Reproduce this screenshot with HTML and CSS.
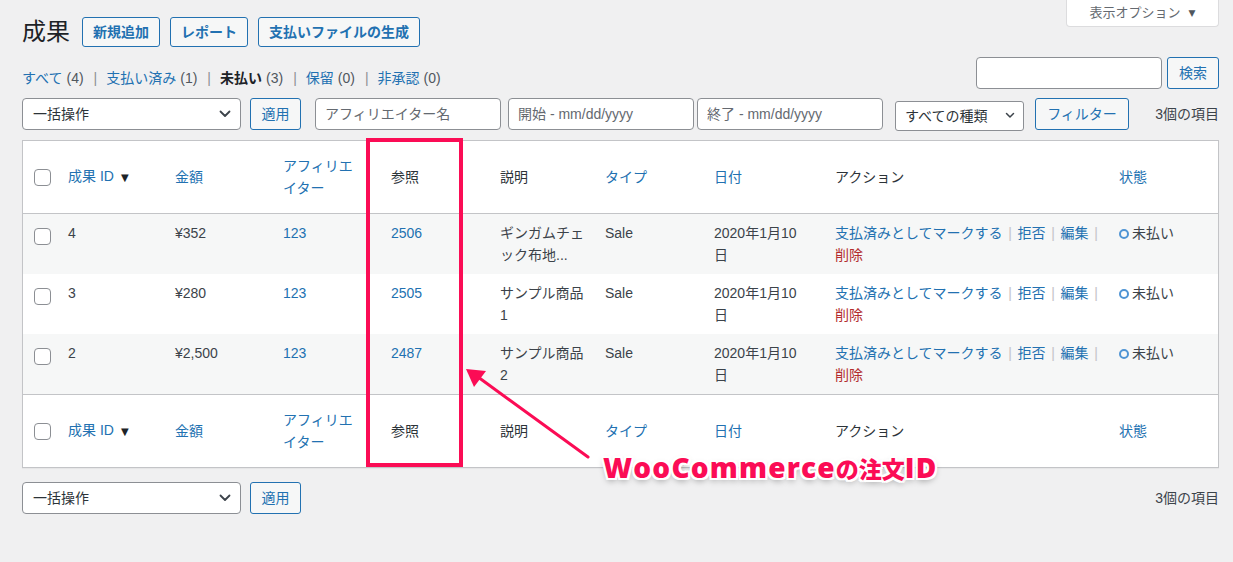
FILE: index.html
```html
<!DOCTYPE html>
<html lang="ja">
<head>
<meta charset="utf-8">
<title>成果</title>
<link rel="stylesheet" href="styles.css">
</head>
<body>
<div class="wrap">
  <div class="head-row">
    <div class="title-group">
      <h1 class="page-title">成果</h1>
      <a class="title-action">新規追加</a>
      <a class="title-action">レポート</a>
      <a class="title-action">支払いファイルの生成</a>
    </div>
    <div class="screen-options">表示オプション<span class="tri">▼</span></div>
  </div>

  <div class="sub-row">
    <ul class="subsubsub">
      <li><a>すべて</a><span class="count">(4)</span><span class="sep">|</span></li>
      <li><a>支払い済み</a><span class="count">(1)</span><span class="sep">|</span></li>
      <li><b class="current">未払い</b><span class="count">(3)</span><span class="sep">|</span></li>
      <li><a>保留</a><span class="count">(0)</span><span class="sep">|</span></li>
      <li><a>非承認</a><span class="count">(0)</span></li>
    </ul>
    <div class="search-box">
      <input class="search-input" type="text">
      <button class="btn">検索</button>
    </div>
  </div>

  <div class="tablenav">
    <div class="select bulk"><span>一括操作</span><svg class="chev" width="12" height="8" viewBox="0 0 12 8"><path d="M1.5 1.5 6 6l4.5-4.5" fill="none" stroke="#3c434a" stroke-width="1.8" stroke-linecap="round" stroke-linejoin="round"/></svg></div>
    <button class="btn apply">適用</button>
    <input class="filter-input f-aff" type="text" placeholder="アフィリエイター名">
    <input class="filter-input f-start" type="text" placeholder="開始 - mm/dd/yyyy">
    <input class="filter-input f-end" type="text" placeholder="終了 - mm/dd/yyyy">
    <div class="select type"><span>すべての種類</span><svg class="chev small" width="10" height="7" viewBox="0 0 10 7"><path d="M1.5 1.5 5 5l3.5-3.5" fill="none" stroke="#3c434a" stroke-width="1.5" stroke-linecap="round" stroke-linejoin="round"/></svg></div>
    <button class="btn filter">フィルター</button>
    <span class="items">3個の項目</span>
  </div>

  <div class="table-box">
    <table class="list">
      <colgroup>
        <col class="c-cb"><col class="c-id"><col class="c-amt"><col class="c-aff"><col class="c-ref"><col class="c-desc"><col class="c-type"><col class="c-date"><col class="c-act"><col class="c-st">
      </colgroup>
      <thead>
        <tr>
          <th class="cb"><span class="check"></span></th>
          <th><a>成果 ID</a><span class="sort">▼</span></th>
          <th><a>金額</a></th>
          <th class="th-aff"><a>アフィリエイター</a></th>
          <th class="plain">参照</th>
          <th class="plain">説明</th>
          <th><a>タイプ</a></th>
          <th><a>日付</a></th>
          <th class="plain">アクション</th>
          <th><a>状態</a></th>
        </tr>
      </thead>
      <tbody>
        <tr class="alt">
          <td class="cb"><span class="check"></span></td>
          <td>4</td>
          <td>¥352</td>
          <td><a>123</a></td>
          <td><a>2506</a></td>
          <td class="desc">ギンガムチェック布地...</td>
          <td>Sale</td>
          <td class="date">2020年1月10日</td>
          <td class="act"><span class="ra"><a>支払済みとしてマークする</a><span class="sep">|</span></span><span class="ra"><a>拒否</a><span class="sep">|</span></span><span class="ra"><a>編集</a><span class="sep">|</span></span><span class="ra"><a class="del">削除</a></span></td>
          <td><span class="ring"></span>未払い</td>
        </tr>
        <tr>
          <td class="cb"><span class="check"></span></td>
          <td>3</td>
          <td>¥280</td>
          <td><a>123</a></td>
          <td><a>2505</a></td>
          <td class="desc">サンプル商品 1</td>
          <td>Sale</td>
          <td class="date">2020年1月10日</td>
          <td class="act"><span class="ra"><a>支払済みとしてマークする</a><span class="sep">|</span></span><span class="ra"><a>拒否</a><span class="sep">|</span></span><span class="ra"><a>編集</a><span class="sep">|</span></span><span class="ra"><a class="del">削除</a></span></td>
          <td><span class="ring"></span>未払い</td>
        </tr>
        <tr class="alt">
          <td class="cb"><span class="check"></span></td>
          <td>2</td>
          <td>¥2,500</td>
          <td><a>123</a></td>
          <td><a>2487</a></td>
          <td class="desc">サンプル商品 2</td>
          <td>Sale</td>
          <td class="date">2020年1月10日</td>
          <td class="act"><span class="ra"><a>支払済みとしてマークする</a><span class="sep">|</span></span><span class="ra"><a>拒否</a><span class="sep">|</span></span><span class="ra"><a>編集</a><span class="sep">|</span></span><span class="ra"><a class="del">削除</a></span></td>
          <td><span class="ring"></span>未払い</td>
        </tr>
      </tbody>
      <tfoot>
        <tr>
          <th class="cb"><span class="check"></span></th>
          <th><a>成果 ID</a><span class="sort">▼</span></th>
          <th><a>金額</a></th>
          <th class="th-aff"><a>アフィリエイター</a></th>
          <th class="plain">参照</th>
          <th class="plain">説明</th>
          <th><a>タイプ</a></th>
          <th><a>日付</a></th>
          <th class="plain">アクション</th>
          <th><a>状態</a></th>
        </tr>
      </tfoot>
    </table>
  </div>

  <div class="tablenav bottom">
    <div class="select bulk"><span>一括操作</span><svg class="chev" width="12" height="8" viewBox="0 0 12 8"><path d="M1.5 1.5 6 6l4.5-4.5" fill="none" stroke="#3c434a" stroke-width="1.8" stroke-linecap="round" stroke-linejoin="round"/></svg></div>
    <button class="btn apply">適用</button>
    <span class="items">3個の項目</span>
  </div>
</div>

<div class="annot-box"></div>
<svg class="annot-arrow" width="1233" height="562" viewBox="0 0 1233 562">
  <line x1="588" y1="457" x2="478" y2="377" stroke="#fb0c55" stroke-width="3" stroke-linecap="round"/>
  <polygon points="466,369 486,371 474,387" fill="#fb0c55"/>
</svg>
<div class="annot-text"><span class="lat">WooCommerce</span><span class="cjk">の注文</span><span class="lat">ID</span></div>
</body>
</html>
```

FILE: styles.css
```css
* { box-sizing: border-box; }
html, body { margin: 0; padding: 0; }
body {
  background: #f0f0f1;
  color: #3c434a;
  font-family: "Liberation Sans", "Noto Sans CJK JP", sans-serif;
  font-size: 14px;
  line-height: 22px;
  position: relative;
  min-height: 562px;
  overflow: hidden;
}
a { color: #2271b1; text-decoration: none; }

.wrap { padding: 0 14px 0 22px; }

/* header */
.head-row { display: flex; justify-content: space-between; align-items: flex-start; }
.title-group { display: flex; align-items: center; margin-top: 16px; height: 31px; }
.page-title {
  margin: 0 12px 0 0;
  font-size: 24px;
  font-weight: 400;
  line-height: 31px;
  color: #1d2327;
}
.title-action {
  display: inline-flex;
  align-items: center;
  height: 30px;
  padding: 0 10px;
  margin-right: 10px;
  border: 1px solid #2271b1;
  border-radius: 3px;
  background: #f6f7f7;
  color: #2271b1;
  font-weight: 700;
  font-size: 14px;
}
.screen-options {
  width: 153px;
  height: 27px;
  display: flex;
  align-items: center;
  justify-content: center;
  gap: 8px;
  background: #fff;
  border: 1px solid #dcdcde;
  border-top: none;
  border-radius: 0 0 4px 4px;
  color: #646970;
  font-size: 13px;
}
.screen-options .tri { font-size: 9px; color: #50575e; font-family: "DejaVu Sans", sans-serif; }

/* views + search */
.sub-row { display: flex; justify-content: space-between; align-items: flex-start; margin-top: 10px; }
.subsubsub { list-style: none; margin: 10px 0 0; padding: 0; display: flex; color: #50575e; font-size: 14px; }
.subsubsub .count { margin-left: 4px; color: #50575e; }
.subsubsub .sep { margin: 0 9px 0 10px; color: #8c8f94; }
.subsubsub .current { color: #1d2327; font-weight: 700; }
.search-box { display: flex; }
.search-input {
  width: 186px;
  height: 32px;
  margin-right: 5px;
  border: 1px solid #8c8f94;
  border-radius: 4px;
  background: #fff;
}

/* buttons */
.btn {
  height: 32px;
  padding: 0 11px;
  border: 1px solid #2271b1;
  border-radius: 3px;
  background: #f6f7f7;
  color: #2271b1;
  font: inherit;
  font-size: 14px;
  line-height: 30px;
}

/* tablenav */
.tablenav { display: flex; align-items: center; height: 32px; margin-top: 9px; }
.tablenav.bottom { margin-top: 14px; }
.select {
  display: flex;
  align-items: center;
  justify-content: space-between;
  height: 32px;
  padding: 0 9px 0 10px;
  border: 1px solid #8c8f94;
  border-radius: 4px;
  background: #fff;
  color: #2c3338;
}
.select.bulk { width: 219px; margin-right: 9px; }
.select.type { width: 129px; height: 30px; margin: 3px 11px 0 12px; border-radius: 3px; padding: 0 8px 0 9px; }
.btn.apply { width: 51px; padding: 0; }
.btn.filter { width: 94px; padding: 0; }
.filter-input {
  width: 186px;
  height: 32px;
  padding: 0 9px;
  border: 1px solid #8c8f94;
  border-radius: 4px;
  background: #fff;
  font: inherit;
  font-size: 14px;
  color: #2c3338;
}
.filter-input::placeholder { color: #646970; }
.f-aff { margin-left: 14px; }
.f-start { margin-left: 7px; }
.f-end { margin-left: 3px; }
.items { margin-left: auto; color: #3c434a; }

/* table */
.table-box {
  margin-top: 10px;
  background: #fff;
  border: 1px solid #c3c4c7;
  box-shadow: 0 1px 1px rgba(0,0,0,.04);
}
.list { width: 100%; border-collapse: collapse; table-layout: fixed; }
.c-cb { width: 35px; }
.c-id { width: 107px; }
.c-amt { width: 108px; }
.c-aff { width: 108px; }
.c-ref { width: 109px; }
.c-desc { width: 105px; }
.c-type { width: 109px; }
.c-date { width: 121px; }
.c-act { width: 284px; }
.c-st { width: 109px; }

.list th {
  text-align: left;
  font-weight: 400;
  padding: 14px 10px;
  vertical-align: middle;
  color: #2c3338;
}
.list thead th { border-bottom: 1px solid #c3c4c7; }
.list tfoot th { border-top: 1px solid #c3c4c7; }
.list th.th-aff { padding-right: 20px; }
.list th.cb { padding: 0 0 0 11px; }
.list .sort { margin-left: 7px; font-size: 10px; color: #1d2327; font-family: "DejaVu Sans", sans-serif; }

.list td { padding: 8px 10px; vertical-align: top; color: #3c434a; }
.list td.cb { padding: 14px 0 0 11px; }
.list tr.alt td { background: #f6f7f7; }
.list td.desc { padding-right: 8px; line-break: loose; }
.list td.date { padding-right: 28px; }
.list td.act { padding-right: 0; }

.check {
  display: block;
  width: 17px;
  height: 17px;
  border: 1px solid #8c8f94;
  border-radius: 4px;
  background: #fff;
}
.ra { white-space: nowrap; }
.ra .sep { display: inline-block; width: 15px; text-align: center; color: #c3c4c7; }
.del { color: #b32d2e; }
.ring {
  display: inline-block;
  width: 10px;
  height: 10px;
  margin-right: 3px;
  border: 2px solid #4f94d4;
  border-radius: 50%;
  vertical-align: -1px;
}

/* annotation overlay */
.annot-box {
  position: absolute;
  left: 366px;
  top: 138px;
  width: 97px;
  height: 329px;
  border: 4px solid #fb0c55;
}
.annot-arrow { position: absolute; left: 0; top: 0; pointer-events: none; }
.annot-text {
  position: absolute;
  left: 603px;
  top: 452px;
  white-space: nowrap;
  color: #fb0c55;
  font-weight: 800;
  line-height: 30px;
  text-shadow:
    2px 0 0 #fff, -2px 0 0 #fff, 0 2px 0 #fff, 0 -2px 0 #fff,
    2px 2px 0 #fff, -2px 2px 0 #fff, 2px -2px 0 #fff, -2px -2px 0 #fff,
    0 3px 6px rgba(0,0,0,.35);
}
.annot-text .lat { font-family: "Open Sans", "Noto Sans", sans-serif; font-size: 28px; letter-spacing: 1.2px; }
.annot-text .cjk { font-family: "Noto Sans CJK JP", sans-serif; font-size: 23px; font-weight: 900; }
```
